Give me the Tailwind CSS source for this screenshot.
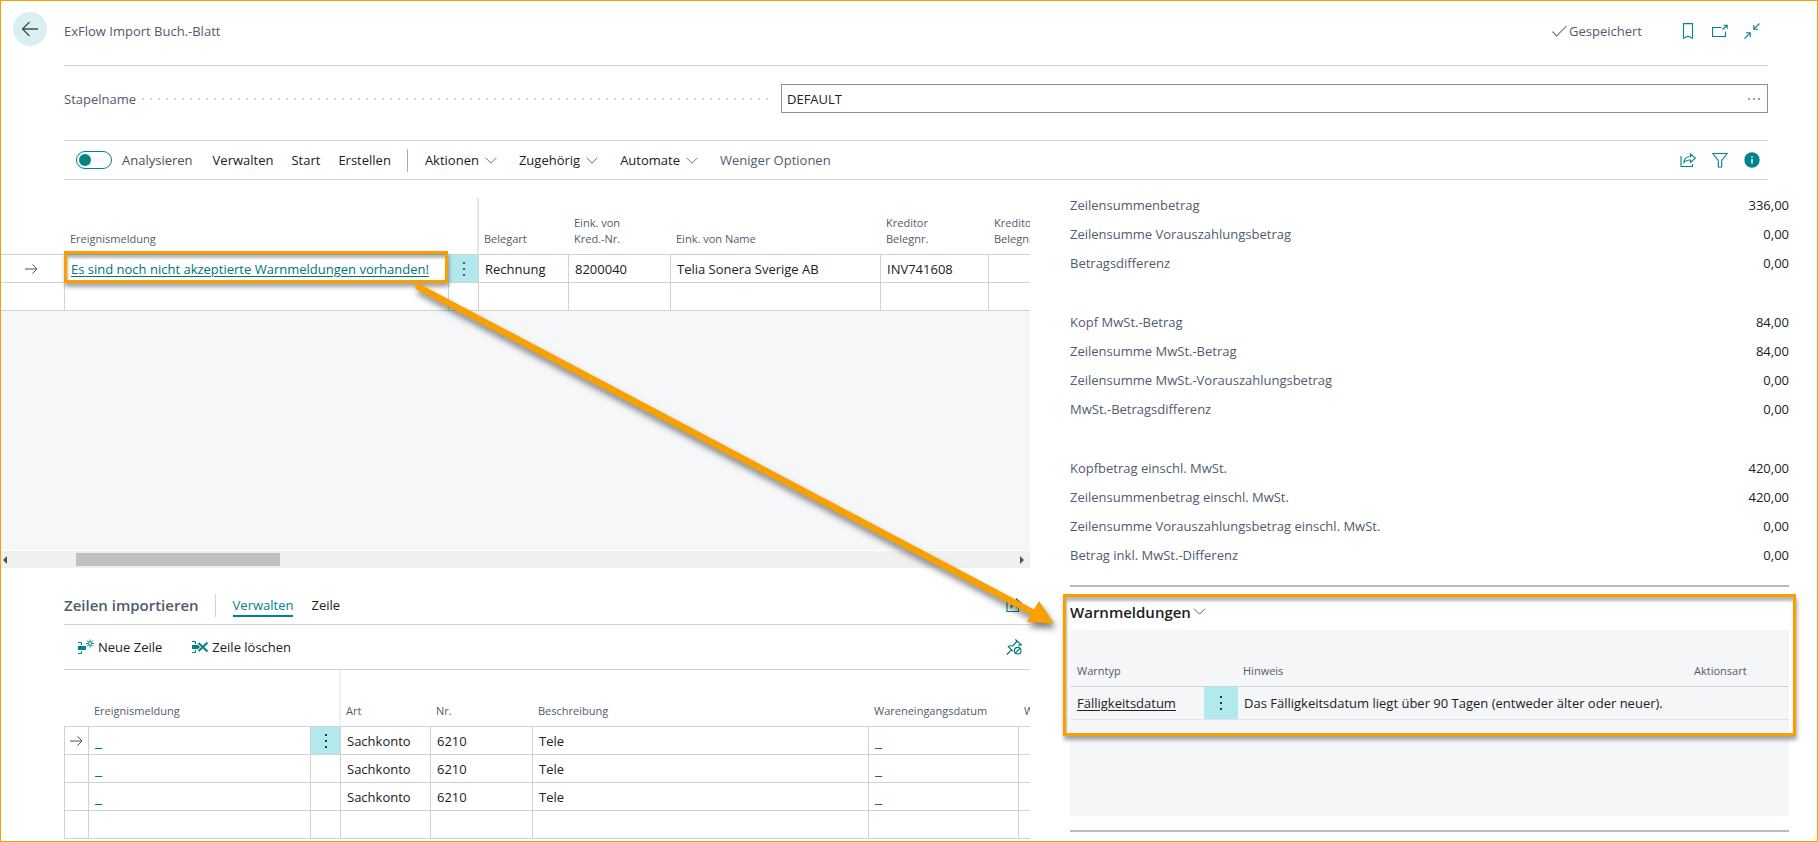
<!DOCTYPE html>
<html lang="de">
<head>
<meta charset="utf-8">
<meta name="viewport" content="width=device-width, initial-scale=1">
<title>ExFlow Import Buch.-Blatt</title>
<script src="https://cdn.jsdelivr.net/npm/@tailwindcss/browser@4"></script>
</head>
<body class="bg-white font-['Open_Sans','Noto_Sans',sans-serif] text-[13px] leading-5 text-[#212121]">
<div class="relative flex min-h-screen flex-col overflow-hidden border border-[#f7a000]">

  <!-- Page header -->
  <header class="flex pr-[49px]">
    <div class="w-[63px] shrink-0 pt-[11px] pl-3">
      <button type="button" aria-label="Zurück" class="flex size-[34px] items-center justify-center rounded-full bg-[#d9f0f2]">
        <svg class="size-[18px]" viewBox="0 0 18 18" fill="none" stroke="#454f4f" stroke-width="1.3"><path d="M17 9H1.5M8.5 2 1.5 9l7 7"/></svg>
      </button>
    </div>
    <div class="flex h-[65px] flex-1 items-start justify-between border-b border-[#d0d2d5] pt-5 text-[#505c6d]">
      <h1>ExFlow Import Buch.-Blatt</h1>
      <div class="flex items-center">
        <span class="flex items-center gap-0.5"><svg class="h-3 w-[15px]" viewBox="0 0 15 12" fill="none" stroke="#7c8791" stroke-width="1.2"><path d="M.5 6.5 4.5 11 14.500 .8"/></svg>Gespeichert</span>
        <div class="ml-[38px] flex items-center gap-4 pr-2 text-[#00838a]">
          <button type="button" aria-label="Lesezeichen"><svg class="size-4" viewBox="0 0 16 16" fill="none" stroke="currentColor" stroke-width="1.1"><path d="M3.500 .6h9v14.600l-4.500-2-4.500 2z"/></svg></button>
          <button type="button" aria-label="In neuem Fenster öffnen"><svg class="size-4" viewBox="0 0 16 16" fill="none" stroke="currentColor" stroke-width="1.1"><path d="M9.500 4.500H.6v9h12.900V8.500M10.500 6.500 15 2.500M11.500 2.200h3.700v3.500"/></svg></button>
          <button type="button" aria-label="Verkleinern"><svg class="size-4" viewBox="0 0 16 16" fill="none" stroke="currentColor" stroke-width="1.1"><path d="M15.500 .5 9.800 6.200M9.800 2v4.200H14M.5 15.500l5.700-5.700M2 9.800h4.200V14"/></svg></button>
        </div>
      </div>
    </div>
  </header>

  <!-- Batch name -->
  <div class="grid grid-cols-[minmax(0,717fr)_minmax(0,987fr)] items-center pt-[18px] pr-[49px] pb-[27px] pl-[63px]">
    <div class="flex items-center">
      <label for="batch" class="text-[#505c6d]">Stapelname</label>
      <svg class="mr-2.5 ml-1 h-0.5 min-w-0 flex-1" aria-hidden="true"><defs><pattern id="dots" width="8" height="2" patternUnits="userSpaceOnUse"><rect x="2" width="2" height="2" fill="#d4d7da"/></pattern></defs><rect width="100%" height="2" fill="url(#dots)"/></svg>
    </div>
    <div class="flex h-[29px] items-center border border-[#8a909e] pr-[7px] pl-[5px]">
      <input id="batch" type="text" value="DEFAULT" class="min-w-0 flex-1 bg-transparent outline-none">
      <button type="button" aria-label="Auswählen"><svg class="h-1 w-3" viewBox="0 0 12 4" fill="#212121"><circle cx="1" cy="2" r=".8"/><circle cx="6" cy="2" r=".8"/><circle cx="11" cy="2" r=".8"/></svg></button>
    </div>
  </div>

  <!-- Action bar -->
  <nav class="mr-[49px] ml-[63px] flex h-10 items-center border-y border-[#d0d2d5] pr-2 pl-3" aria-label="Aktionen">
    <label class="flex items-center gap-2.5 text-[#505050]">
      <input type="checkbox" role="switch" class="peer sr-only">
      <span class="flex h-[18px] w-9 items-center rounded-full border border-[#00838a] pl-0.5"><span class="size-3 rounded-full bg-[#00838a]"></span></span>
      Analysieren
    </label>
    <div class="ml-5 flex items-center gap-[18px]">
      <button type="button">Verwalten</button>
      <button type="button">Start</button>
      <button type="button">Erstellen</button>
    </div>
    <span class="mr-[17px] ml-4 h-[23px] w-px bg-[#a6adb5]"></span>
    <div class="flex items-center gap-[22px]">
      <button type="button" class="flex items-center gap-1.5">Aktionen<svg class="h-[7px] w-3" viewBox="0 0 12 7" fill="none" stroke="#6b757d"><path d="M.5 .7 6 6.200 11.500 .7"/></svg></button>
      <button type="button" class="flex items-center gap-1.5">Zugehörig<svg class="h-[7px] w-3" viewBox="0 0 12 7" fill="none" stroke="#6b757d"><path d="M.5 .7 6 6.200 11.500 .7"/></svg></button>
      <button type="button" class="flex items-center gap-1.5">Automate<svg class="h-[7px] w-3" viewBox="0 0 12 7" fill="none" stroke="#6b757d"><path d="M.5 .7 6 6.200 11.500 .7"/></svg></button>
      <button type="button" class="text-[#505c6d]">Weniger Optionen</button>
    </div>
    <div class="ml-auto flex items-center gap-4 text-[#00838a]">
      <button type="button" aria-label="Teilen"><svg class="size-4" viewBox="0 0 16 16" fill="none" stroke="currentColor" stroke-width="1.1"><path d="M1 4v10.500h11.500V12M4 10.500C4.300 6.500 7 4.500 10.500 4.500V2L15.300 6.200 10.500 10.500V8C8 7.800 5.800 8.500 4 10.500z"/></svg></button>
      <button type="button" aria-label="Filter"><svg class="size-4" viewBox="0 0 16 16" fill="none" stroke="currentColor" stroke-width="1.1"><path d="M.8 1.500h14.400L9.700 8.500V15H6.300V8.500z"/></svg></button>
      <button type="button" aria-label="Info"><svg class="size-4" viewBox="0 0 16 16"><circle cx="8" cy="8" r="7.700" fill="currentColor"/><path d="M8 7v4.500M8 4.300v1.400" stroke="#fff" stroke-width="1.400"/></svg></button>
    </div>
  </nav>

  <div class="grid flex-1 grid-cols-[minmax(0,1029fr)_minmax(0,787fr)]">
    <main class="min-w-0">
      <!-- Journal lines -->
      <div class="relative bg-[#f6f7f9]">
        <div class="h-[18px] bg-white"></div>
        <div class="overflow-x-clip">
        <table class="w-[1095px] table-fixed border-separate border-spacing-0 bg-white text-left">
          <colgroup><col class="w-16"><col class="w-[384px]"><col class="w-[30px]"><col class="w-[90px]"><col class="w-[102px]"><col class="w-[210px]"><col class="w-[108px]"><col class="w-[107px]"></colgroup>
          <thead>
            <tr class="h-[57px] align-bottom text-[11px] leading-4 text-[#505c6d] *:border-b *:border-b-[#d0d2d9] *:pb-[7px] *:font-normal">
              <th></th>
              <th class="pl-[5px]">Ereignismeldung</th>
              <th class="border-r-2 border-r-[#e3e4e7]"></th>
              <th class="pl-[5px]">Belegart</th>
              <th class="pl-[5px]">Eink. von<br>Kred.-Nr.</th>
              <th class="pl-[5px]">Eink. von Name</th>
              <th class="pl-[5px]">Kreditor<br>Belegnr.</th>
              <th class="pl-[5px]">Kreditor<br>Belegnr.</th>
            </tr>
          </thead>
          <tbody>
            <tr class="h-7 *:border-r *:border-b *:border-[#d0d2d9]">
              <td class="pl-6"><svg class="h-2.5 w-[13px]" viewBox="0 0 13 10" fill="none" stroke="#505050"><path d="M0 5h12M7.500 .5 12 5l-4.500 4.500"/></svg></td>
              <td class="relative pl-1.5"><a href="#" class="whitespace-nowrap text-[#00747a] underline underline-offset-2">Es sind noch nicht akzeptierte Warnmeldungen vorhanden!</a>
                <span class="pointer-events-none absolute -top-1 right-0 -bottom-px -left-px border-3 border-[#f7a000] shadow-[1px_4px_4px_rgba(0,0,0,.35),inset_1px_4px_3px_rgba(0,0,0,.28)]"></span></td>
              <td class="border-r-2 bg-[#b2e9ec]"><button type="button" aria-label="Weitere Optionen" class="flex w-full justify-center"><svg class="h-3.5 w-0.5" viewBox="0 0 2 14" fill="#505c5c"><path d="M0 0h2v2H0zM0 6h2v2H0zM0 12h2v2H0z"/></svg></button></td>
              <td class="pl-1.5">Rechnung</td>
              <td class="pl-1.5">8200040</td>
              <td class="pl-1.5">Telia Sonera Sverige AB</td>
              <td class="pl-1.5">INV741608</td>
              <td></td>
            </tr>
            <tr class="h-7 *:border-r *:border-b *:border-[#d0d2d9]"><td></td><td></td><td class="border-r-2"></td><td></td><td></td><td></td><td></td><td></td></tr>
          </tbody>
        </table>
        </div>
        <div class="h-[239px]"></div>
        <!-- Horizontal scroll bar -->
        <div class="flex h-[18px] items-center justify-between border-t border-white bg-[#f0f0f0] px-0.5">
          <svg class="h-2 w-1" viewBox="0 0 4 8" fill="#505050"><path d="M4 0v8L0 4z"/></svg>
          <div class="flex-1 pr-[55px] pl-[69px]"><div class="h-[13px] w-[23%] bg-[#c1c1c1]"></div></div>
          <svg class="mr-1 h-2 w-1" viewBox="0 0 4 8" fill="#505050"><path d="M0 0v8l4-4z"/></svg>
        </div>
      </div>

      <!-- Import lines -->
      <section class="ml-[63px]">
        <div class="flex h-[57px] items-end border-b border-[#d0d2d5] pb-[7px]">
          <h2 class="pb-0.5 text-[15px] leading-5 font-semibold text-[#505c6d]">Zeilen importieren</h2>
          <span class="mr-[17px] ml-4 h-[23px] w-px bg-[#d0d2d5]"></span>
          <button type="button" class="border-b-2 border-[#00838a] text-[#00838a]">Verwalten</button>
          <button type="button" class="ml-[18px] pb-0.5">Zeile</button>
          <button type="button" aria-label="Teilen" class="mr-2 ml-auto pb-1 text-[#00838a]"><svg class="size-4" viewBox="0 0 16 16" fill="none" stroke="currentColor" stroke-width="1.1"><path d="M7 3H1v11.500h11.500V10M5 10.500C5.300 6.500 7 4.500 10.500 4.500V2L15.300 6.200 10.500 10.500V8C8 7.800 6.800 8.500 5 10.500z"/></svg></button>
        </div>
        <div class="flex h-[45px] items-center border-b border-[#d0d2d5] pr-2 pl-3.5">
          <button type="button" class="flex items-center gap-1"><svg class="size-4" viewBox="0 0 16 16" fill="none" stroke="#00838a"><path d="M0 3.500h3.500V6M0 14.500h3.500V12"/><path d="M0 7h8v4H0z" fill="#00838a" stroke="none"/><circle cx="12" cy="4.500" r="1.700"/><path d="M12 .5v2M12 6.500v2M8 4.500h2M14 4.500h2M9 1.500l1.500 1.500M13.500 6 15 7.500M15 1.500 13.500 3M10.500 6 9 7.500"/></svg>Neue Zeile</button>
          <button type="button" class="ml-[30px] flex items-center gap-1"><svg class="size-4" viewBox="0 0 16 16" fill="none" stroke="#00838a"><path d="M0 2.500h3.500V5M0 13.500h3.500V11"/><path d="M0 6h6l2 2-2 2H0z" fill="#00838a" stroke="none"/><path d="M6.500 4l9 8.500M15.500 3.500l-9 8.500" stroke-width="2"/></svg>Zeile löschen</button>
          <button type="button" aria-label="Anheften" class="ml-auto text-[#00747a]"><svg class="size-4" viewBox="0 0 16 16" fill="none" stroke="currentColor" stroke-width="1.1"><path d="M.8 15.500 5.500 10.800M7 12.300 2.300 7.500C4 6.500 5.500 6.700 6.700 7L10.500 3 10 1l5.500 5-1.700-.2-1.300 1.200"/><circle cx="11.700" cy="11.700" r="3.300"/><path d="m9.400 14 4.600-4.600"/></svg></button>
        </div>
        <div class="overflow-x-clip">
        <table class="w-[1076px] table-fixed border-separate border-spacing-0 text-left">
          <colgroup><col class="w-[25px]"><col class="w-[222px]"><col class="w-[30px]"><col class="w-[90px]"><col class="w-[102px]"><col class="w-[336px]"><col class="w-[150px]"><col class="w-[121px]"></colgroup>
          <thead>
            <tr class="h-[57px] align-bottom text-[11px] leading-4 text-[#505c6d] *:border-b *:border-b-[#d0d2d9] *:pb-[7px] *:font-normal">
              <th></th>
              <th class="pl-[5px]">Ereignismeldung</th>
              <th class="border-r-2 border-r-[#f0f1f3]"></th>
              <th class="pl-[5px]">Art</th>
              <th class="pl-[5px]">Nr.</th>
              <th class="pl-[5px]">Beschreibung</th>
              <th class="pl-[5px]">Wareneingangsdatum</th>
              <th class="pl-[5px]">Wareneing.</th>
            </tr>
          </thead>
          <tbody>
            <tr class="h-7 *:border-r *:border-b *:border-[#d0d2d9]">
              <td class="border-l pl-[5px]"><svg class="h-2.5 w-[13px]" viewBox="0 0 13 10" fill="none" stroke="#505050"><path d="M0 5h12M7.500 .5 12 5l-4.500 4.500"/></svg></td>
              <td class="pl-1.5"><a href="#" class="block text-base leading-5 text-[#00747a]">_</a></td>
              <td class="bg-[#b2e9ec]"><button type="button" aria-label="Weitere Optionen" class="flex w-full justify-center"><svg class="h-3.5 w-0.5" viewBox="0 0 2 14" fill="#303838"><path d="M0 0h2v2H0zM0 6h2v2H0zM0 12h2v2H0z"/></svg></button></td>
              <td class="pl-1.5">Sachkonto</td><td class="pl-1.5">6210</td><td class="pl-1.5">Tele</td>
              <td class="pl-1.5"><a href="#" class="block text-base leading-5 text-[#00747a]">_</a></td><td></td>
            </tr>
            <tr class="h-7 *:border-r *:border-b *:border-[#d0d2d9]">
              <td class="border-l"></td><td class="pl-1.5"><a href="#" class="block text-base leading-5 text-[#00747a]">_</a></td><td></td>
              <td class="pl-1.5">Sachkonto</td><td class="pl-1.5">6210</td><td class="pl-1.5">Tele</td>
              <td class="pl-1.5"><a href="#" class="block text-base leading-5 text-[#00747a]">_</a></td><td></td>
            </tr>
            <tr class="h-7 *:border-r *:border-b *:border-[#d0d2d9]">
              <td class="border-l"></td><td class="pl-1.5"><a href="#" class="block text-base leading-5 text-[#00747a]">_</a></td><td></td>
              <td class="pl-1.5">Sachkonto</td><td class="pl-1.5">6210</td><td class="pl-1.5">Tele</td>
              <td class="pl-1.5"><a href="#" class="block text-base leading-5 text-[#00747a]">_</a></td><td></td>
            </tr>
            <tr class="h-7 *:border-r *:border-b *:border-[#d0d2d9]"><td class="border-l"></td><td></td><td></td><td></td><td></td><td></td><td></td><td></td></tr>
          </tbody>
        </table>
        </div>
      </section>
    </main>

    <!-- Fact box pane -->
    <aside class="min-w-0 pt-2.5 pr-7 pl-10">
      <dl class="space-y-[30px] text-[#505c6d]">
        <div>
          <div class="flex h-[29px] items-center justify-between"><dt>Zeilensummenbetrag</dt><dd class="text-[#212121]">336,00</dd></div>
          <div class="flex h-[29px] items-center justify-between"><dt>Zeilensumme Vorauszahlungsbetrag</dt><dd class="text-[#212121]">0,00</dd></div>
          <div class="flex h-[29px] items-center justify-between"><dt>Betragsdifferenz</dt><dd class="text-[#212121]">0,00</dd></div>
        </div>
        <div>
          <div class="flex h-[29px] items-center justify-between"><dt>Kopf MwSt.-Betrag</dt><dd class="text-[#212121]">84,00</dd></div>
          <div class="flex h-[29px] items-center justify-between"><dt>Zeilensumme MwSt.-Betrag</dt><dd class="text-[#212121]">84,00</dd></div>
          <div class="flex h-[29px] items-center justify-between"><dt>Zeilensumme MwSt.-Vorauszahlungsbetrag</dt><dd class="text-[#212121]">0,00</dd></div>
          <div class="flex h-[29px] items-center justify-between"><dt>MwSt.-Betragsdifferenz</dt><dd class="text-[#212121]">0,00</dd></div>
        </div>
        <div>
          <div class="flex h-[29px] items-center justify-between"><dt>Kopfbetrag einschl. MwSt.</dt><dd class="text-[#212121]">420,00</dd></div>
          <div class="flex h-[29px] items-center justify-between"><dt>Zeilensummenbetrag einschl. MwSt.</dt><dd class="text-[#212121]">420,00</dd></div>
          <div class="flex h-[29px] items-center justify-between"><dt>Zeilensumme Vorauszahlungsbetrag einschl. MwSt.</dt><dd class="text-[#212121]">0,00</dd></div>
          <div class="flex h-[29px] items-center justify-between"><dt>Betrag inkl. MwSt.-Differenz</dt><dd class="text-[#212121]">0,00</dd></div>
        </div>
      </dl>
      <section class="relative mt-4 border-y-2 border-[#b6bbc3] pb-3.5">
        <h2 class="flex h-[43px] items-center pt-1.5"><button type="button" class="flex items-center gap-0.5 text-[15px] leading-5 font-semibold">Warnmeldungen<svg class="h-[7px] w-[13px]" viewBox="0 0 12 7" fill="none" stroke="#505c6d"><path d="M.5 .7 6 6.200 11.500 .7"/></svg></button></h2>
        <div class="h-[186px] bg-[#f5f6f8]">
          <table class="w-full table-fixed border-separate border-spacing-0 text-left">
            <colgroup><col class="w-[134px]"><col class="w-[34px]"><col><col class="w-[100px]"></colgroup>
            <thead>
              <tr class="h-[57px] align-bottom text-[11px] leading-4 text-[#505c6d] *:border-b *:border-[#d0d2d9] *:pb-[7px] *:font-normal">
                <th class="pl-[7px]">Warntyp</th><th></th><th class="pl-[5px]">Hinweis</th><th class="pl-[5px]">Aktionsart</th>
              </tr>
            </thead>
            <tbody>
              <tr class="h-[33px] *:border-b *:border-[#e1e3e6]">
                <td class="pl-[7px]"><a href="#" class="underline underline-offset-2">Fälligkeitsdatum</a></td>
                <td class="bg-[#b2e9ec]"><button type="button" aria-label="Weitere Optionen" class="flex w-full justify-center"><svg class="h-3.5 w-0.5" viewBox="0 0 2 14" fill="#303838"><path d="M0 0h2v2H0zM0 6h2v2H0zM0 12h2v2H0z"/></svg></button></td>
                <td class="pl-1.5 whitespace-nowrap">Das Fälligkeitsdatum liegt über 90 Tagen (entweder älter oder neuer).</td>
                <td></td>
              </tr>
            </tbody>
          </table>
        </div>
        <span class="pointer-events-none absolute top-[7px] -right-[7px] -left-[7px] h-[142px] border-3 border-[#f7a000] shadow-[1px_4px_4px_rgba(0,0,0,.35),inset_1px_4px_3px_rgba(0,0,0,.28)]"></span>
      </section>
    </aside>
  </div>

  <!-- Callout arrow from the event message to the warnings -->
  <svg class="pointer-events-none absolute top-[269px] left-[399px] h-[371px] w-[671px] drop-shadow-[2px_5px_3px_rgba(0,0,0,.5)]" viewBox="400 270 671 371" fill="none" aria-hidden="true">
    <path d="M418.500 287 1034 613" stroke="#f7a000" stroke-width="6.500" stroke-linecap="round"/>
    <path d="M1054 623.500 1039 601 1027 622z" fill="#f7a000"/>
  </svg>
</div>
</body>
</html>
